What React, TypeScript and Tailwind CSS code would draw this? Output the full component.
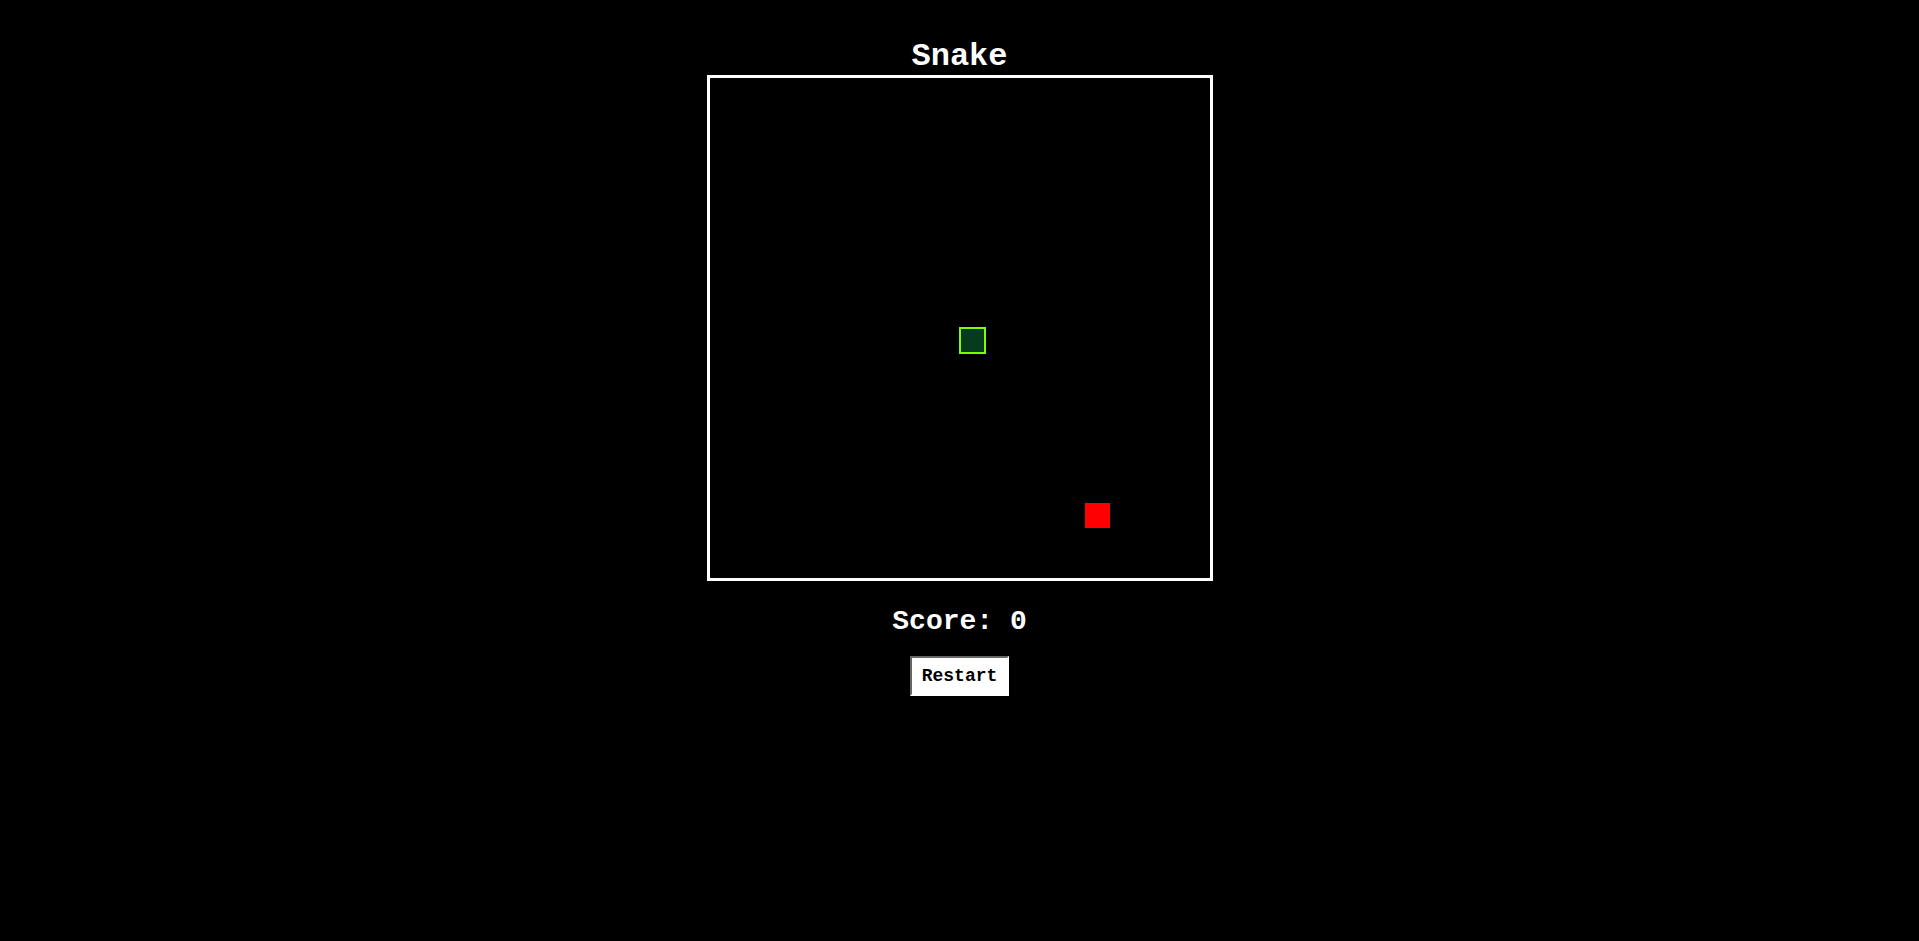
import React from "react";

const FONT = '"Courier New", "Nimbus Mono PS", "FreeMono", "Liberation Mono", monospace';

export default function App() {
  return (
    <div
      className="min-h-[941px] w-full bg-black flex flex-col items-center pt-[41px]"
      style={{ fontFamily: FONT }}
    >
      <h1 className="text-[32px] leading-[32px] font-bold text-white m-0">Snake</h1>
      <div className="mt-[2px] w-[506px] h-[506px] border-[3px] border-white relative bg-black">
        <div className="absolute left-[249px] top-[249px] w-[27px] h-[27px] border-2 border-[#7cfc00] bg-[#063b1d]" />
        <div className="absolute left-[375px] top-[425px] w-[25px] h-[25px] bg-[#ff0000]" />
      </div>
      <div className="mt-[27px] text-[28px] leading-[28px] font-bold text-white">Score: 0</div>
      <button
        className="mt-[20px] w-[99px] h-[40px] bg-white text-black text-[18px] font-bold flex items-center justify-center border-2 border-t-[#666666] border-l-[#666666] border-r-white border-b-white"
        style={{ fontFamily: FONT }}
      >
        Restart
      </button>
    </div>
  );
}
